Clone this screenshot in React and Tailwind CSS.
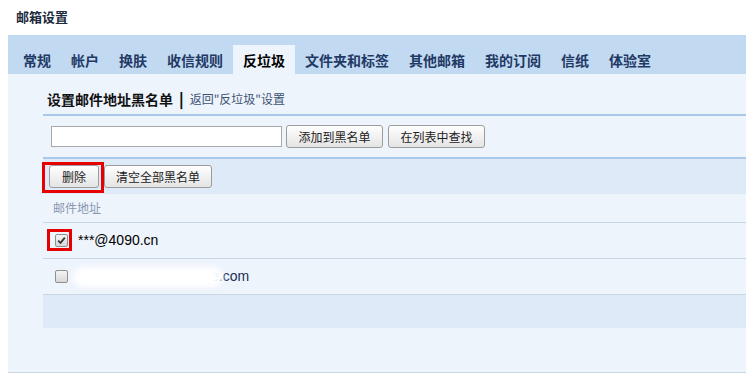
import React from 'react';

const tabs = ['常规', '帐户', '换肤', '收信规则', '反垃圾', '文件夹和标签', '其他邮箱', '我的订阅', '信纸', '体验室'];

function Btn({ children, className = '' }) {
    return (
        <button
            className={`h-[23px] rounded-[3px] border border-[#9c9c9c] bg-gradient-to-b from-white to-[#e4e4e4] text-[12px] text-[#222] leading-none ${className}`}
        >
            {children}
        </button>
    );
}

function Check({ checked }) {
    return (
        <span className="flex h-[13px] w-[13px] items-center justify-center rounded-[2px] border border-[#8f8f8f] bg-gradient-to-b from-[#f4f4f4] to-[#d8d8d8]">
            {checked && (
                <svg width="9" height="9" viewBox="0 0 9 9">
                    <path d="M1.2 4.6 L3.5 7 L7.8 1.6" fill="none" stroke="#333" strokeWidth="1.8" />
                </svg>
            )}
        </span>
    );
}

export default function App() {
    return (
        <div className="relative h-[373px] w-[746px] overflow-hidden bg-white font-['Noto_Sans_CJK_SC','Microsoft_YaHei',sans-serif]">
            {/* 标题 */}
            <div className="flex h-[35px] items-center pl-[16px] pb-[2px] text-[13px] font-bold text-[#1c2a3c]">邮箱设置</div>

            <div className="ml-[8px]">
                {/* 标签栏 */}
                <div className="flex h-[39px] items-end bg-[#c2d9f2] pl-[5px]">
                    {tabs.map((t) => (
                        <div
                            key={t}
                            className={`flex h-[29px] items-center px-[10px] text-[14px] font-bold leading-none ${
                                t === '反垃圾' ? 'bg-[#eef4fc] text-black' : 'text-[#1f3a64]'
                            }`}
                        >
                            {t}
                        </div>
                    ))}
                </div>

                {/* 内容 */}
                <div className="h-[299px] border-b border-[#c8d6e4] bg-[#eef4fc] pl-[35px]">
                    <div className="flex h-[40px] items-center pl-[4px] pt-[10px]">
                        <span className="text-[14px] font-bold text-[#111]">设置邮件地址黑名单</span>
                        <span className="mx-[6px] text-[15px] font-black text-[#111]">|</span>
                        <span className="text-[12px] text-[#3c5272]">返回"反垃圾"设置</span>
                    </div>

                    <div className="flex h-[43px] items-center gap-[4px] border-t-2 border-[#aac8ea] pl-[8px]">
                        <input className="h-[21px] w-[231px] border border-[#a8a8a8] bg-white" />
                        <Btn className="w-[97px]">添加到黑名单</Btn>
                        <Btn className="ml-[1px] w-[97px]">在列表中查找</Btn>
                    </div>

                    <div className="relative flex h-[37px] items-center gap-[5px] border-t-2 border-[#aac8ea] bg-[#deeaf8] pl-[6px]">
                        <Btn className="w-[50px]">删除</Btn>
                        <Btn className="w-[108px]">清空全部黑名单</Btn>
                        <div className="absolute left-[-1px] top-[3px] h-[31px] w-[62px] border-[3px] border-[#e60000]" />
                    </div>

                    <div className="flex h-[29px] items-center border-b border-[#c8d6e4] pl-[10px] pb-[1px] text-[12px] text-[#8898b0]">
                        邮件地址
                    </div>

                    <div className="relative flex h-[36px] items-center border-b border-[#c8d6e4] pl-[12px]">
                        <Check checked />
                        <span className="ml-[10px] font-['Liberation_Sans',Arial,sans-serif] text-[14px] text-black">***@4090.cn</span>
                        <div className="absolute left-[4px] top-[6px] h-[22px] w-[25px] border-[3px] border-[#e60000]" />
                    </div>

                    <div className="relative flex h-[36px] items-center border-b border-[#c8d6e4] pl-[12px]">
                        <Check />
                        <span className="ml-[10px] font-['Liberation_Sans',Arial,sans-serif] text-[14px] text-[#1a2f55]">
                            <span className="text-[#c9d3dd]">xxxxxxxxxxxxxxxxxxx</span>e.com
                        </span>
                        <div className="absolute left-[30px] top-[8px] h-[20px] w-[150px] rounded-full bg-white blur-[3px]" />
                    </div>

                    <div className="h-[33px] bg-[#deeaf8]" />
                </div>
            </div>
        </div>
    );
}
